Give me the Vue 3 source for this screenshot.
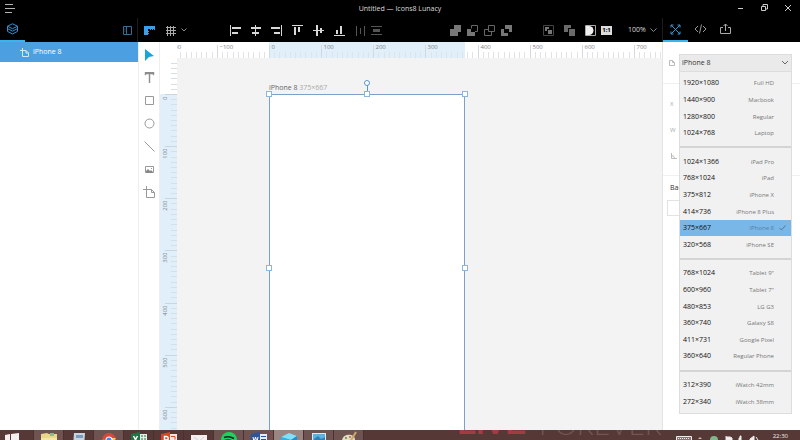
<script setup>
import { ref } from 'vue'

const scale = 0.5213
const origin = { x: 92, y: 36 }
const artboard = { width: 196, height: 348 }

const ticks = (start, from, length) => {
  const list = []
  for (let v = from; start + v * scale < length; v += 10) {
    list.push({ value: v, at: Math.round(start + v * scale) + 0.5, major: v % 100 === 0 })
  }
  return list
}
const across = ticks(origin.x, -200, window.innerWidth - 315)
const down = ticks(origin.y, -60, window.innerHeight - 68)
const minus = (v) => String(v).replace('-', '−')

const aligns = [
  { name: 'Align left', d: 'M1 0h1v11H1zM3 2h9v2H3zM3 7h6v2H3z' },
  { name: 'Align centre', d: 'M5 0h1v11H5zM1 2h10v2H1zM2 7h7v2H2z' },
  { name: 'Align right', d: 'M10 0h1v11h-1zM0 2h9v2H0zM3 7h6v2H3z' },
  { name: 'Align top', d: 'M0 0h11v1H0zM2 2h2v8H2zM6 2h2v5H6z' },
  { name: 'Align middle', d: 'M0 5h11v1H0zM3 0h2v11H3zM7 3h2v5H7z' },
  { name: 'Align bottom', d: 'M0 10h11v1H0zM2 5h2v4H2zM6 1h2v8H6z' },
  { name: 'Distribute horizontally', d: 'M1 1h1v10H1zM9 1h1v10H9zM5 3h1v6H5z', dim: true },
]
const booleans = [
  { name: 'Union', fill: 'M4 0h7v7H8v4H0V4h4z', line: '' },
  { name: 'Subtract', fill: 'M0 4h4v3h4v4H0z', line: 'M4.500 3.500v-3h6v6H8' },
  { name: 'Intersect', fill: '', line: 'M4.500 .5h6v6h-6zM4 4.500H.5v6h7V7' },
  { name: 'Exclude', fill: 'M4 0h7v7H8V4H4zM0 4h3v4h4v3H0z', line: '' },
]
const groups = [
  [['1920×1080', 'Full HD'], ['1440×900', 'Macbook'], ['1280×800', 'Regular'], ['1024×768', 'Laptop']],
  [['1024×1366', 'iPad Pro'], ['768×1024', 'iPad'], ['375×812', 'iPhone X'], ['414×736', 'iPhone 8 Plus'], ['375×667', 'iPhone 8'], ['320×568', 'iPhone SE']],
  [['768×1024', 'Tablet 9"'], ['600×960', 'Tablet 7"'], ['480×853', 'LG G3'], ['360×740', 'Galaxy S8'], ['411×731', 'Google Pixel'], ['360×640', 'Regular Phone']],
  [['312×390', 'iWatch 42mm'], ['272×340', 'iWatch 38mm']],
]
const preset = ref('iPhone 8')
const zoom = ref('100%')
</script>

<template>
  <div class="app">
    <header class="titlebar">
      <button class="plain" aria-label="Menu">
        <svg width="20" height="18"><path d="M5 4.500h8M5 8.500h10M5 12.500h7" stroke="#b5b5b5" /></svg>
      </button>
      <h1>Untitled — Icons8 Lunacy</h1>
      <div class="window">
        <button class="plain" aria-label="Minimize"><svg width="8" height="8"><path d="M2 4.500h5" stroke="#ccc" /></svg></button>
        <button class="plain" aria-label="Restore"><svg width="8" height="8"><path d="M1.500 2.500h4v4h-4zM3 2V.5h4.500V5H6" fill="none" stroke="#ccc" /></svg></button>
        <button class="plain" aria-label="Close"><svg width="8" height="8"><path d="M1 1l6 6M7 1L1 7" stroke="#ccc" /></svg></button>
      </div>
    </header>

    <nav class="toolbar">
      <div class="side">
        <button class="tab on" aria-label="Layers">
          <svg width="13" height="12" fill="none" stroke="#3690d0"><path d="M6.500 .8l5 2.400-5 2.500-5-2.500zM1.500 3.200v5.200l5 2.600 5-2.600V3.200M1.500 5.600l5 2.600 5-2.600" /></svg>
        </button>
        <button class="plain" aria-label="Pages">
          <svg width="9" height="9" fill="none" stroke="#2f6f9e"><path d="M.5 .5h8v8h-8zM3.500 .5v8M1.500 3h1M1.500 5h1" /></svg>
        </button>
      </div>
      <div class="middle">
        <div class="set">
          <button class="plain w21" aria-label="Rulers">
            <svg width="11" height="11"><path d="M0 1h11v4h-1V4H9v1H8V4H7v1H6V4H4v2h1v1H4v1h1v1H4v1H0z" fill="#3a9fe6" /></svg>
          </button>
          <button class="plain w21" aria-label="Grid">
            <svg width="11" height="11"><path d="M2.500 1v10M5.500 1v10M8.500 1v10M1 2.500h10M1 5.500h10M1 8.500h10" stroke="#aaa" /></svg>
          </button>
          <button class="plain" aria-label="Grid options">
            <svg width="6" height="6"><path d="M.5 1.500l2.500 2.500 2.500-2.500" fill="none" stroke="#888" /></svg>
          </button>
        </div>
        <div class="set aligns">
          <button v-for="a in aligns" :key="a.name" class="plain w21" :aria-label="a.name">
            <svg width="12" height="11"><path :d="a.d" :fill="a.dim ? '#555' : '#d8d8d8'" /></svg>
          </button>
          <button class="plain" aria-label="Distribute vertically">
            <svg width="11" height="11"><path d="M0 1h11v1H0zM0 9h11v1H0zM2 4h7v3H2z" fill="#555" /></svg>
          </button>
        </div>
        <div class="set booleans">
          <button v-for="b in booleans" :key="b.name" class="plain w17" :aria-label="b.name">
            <svg width="11" height="11"><path :d="b.fill" fill="#777" /><path :d="b.line" fill="none" stroke="#666" /></svg>
          </button>
        </div>
        <div class="set extras">
          <button class="plain w21" aria-label="Group">
            <svg width="11" height="11"><path d="M.5 .5h10v10H.5z" fill="none" stroke="#444" /><path d="M2 2h4v2H4v2H2zM5 5h4v4H5z" fill="#777" /></svg>
          </button>
          <button class="plain w21" aria-label="Ungroup">
            <svg width="11" height="11"><path d="M0 0h7v3H4v4H0zM5 4h6v7H5z" fill="#6a6a6a" /></svg>
          </button>
          <button class="plain w21" aria-label="Mask">
            <svg width="11" height="11"><path d="M.5 .5h10v10H.5z" fill="none" stroke="#aaa" /><path d="M1 1h3a4.500 4.500 0 010 9H1z" fill="#eee" /></svg>
          </button>
          <button class="plain ratio" aria-label="Actual size">1:1</button>
        </div>
        <label class="zoom">
          <select v-model="zoom" aria-label="Zoom"><option>100%</option><option>200%</option></select>
          <svg width="7" height="6"><path d="M.5 1.500l3 3 3-3" fill="none" stroke="#888" /></svg>
        </label>
      </div>
      <div class="modes">
        <button class="tab on" aria-label="Design">
          <svg width="11" height="11" fill="none" stroke="#3b93d2"><path d="M1 1l9 9M10 1l-9 9M1 3.500V1h2.500M7.500 1H10v2.500M10 7.500V10H7.500M3.500 10H1V7.500" /></svg>
        </button>
        <button class="tab" aria-label="Code">
          <svg width="13" height="10" fill="none" stroke="#999"><path d="M4 2L1 5l3 3M9 2l3 3-3 3M7.500 .5l-2 9" /></svg>
        </button>
        <button class="tab" aria-label="Export">
          <svg width="13" height="12" fill="none" stroke="#aaa"><path d="M4 4.500H1.500v6h10v-6H9M6.500 8V1M4.500 3l2-2 2 2" /></svg>
        </button>
      </div>
    </nav>

    <main class="body">
      <aside class="layers">
        <button class="layer">
          <svg width="9" height="9" fill="none" stroke="#d5e8f8"><path d="M2.500 0v8.500h6V5L6 2.500H0M6 2.500V5h2.500" /></svg>
          <span>iPhone 8</span>
        </button>
      </aside>

      <nav class="tools">
        <button class="plain" aria-label="Select"><svg width="11" height="13"><path d="M1 1l9 7-5 1-4 4z" fill="#18a5dc" /></svg></button>
        <button class="plain" aria-label="Text"><svg width="11" height="11"><path d="M1 0h9v3H9V2H6v9H5V2H2v1H1z" fill="#888" stroke="#999" stroke-width=".5" /></svg></button>
        <button class="plain" aria-label="Rectangle"><svg width="11" height="11"><path d="M1.500 1.500h8v8h-8z" fill="none" stroke="#999" /></svg></button>
        <button class="plain" aria-label="Oval"><svg width="11" height="11"><circle cx="5.500" cy="5.500" r="4.500" fill="none" stroke="#999" /></svg></button>
        <button class="plain" aria-label="Line"><svg width="11" height="11"><path d="M.5 .5l10 10" stroke="#999" /></svg></button>
        <button class="plain" aria-label="Image"><svg width="11" height="9"><path d="M1.500 1.500h8v6h-8z" fill="none" stroke="#999" /><path d="M2 6l2-2 2 2 1-1 2 2v1H2z" fill="#888" /><path d="M7 3h1v1H7z" fill="#999" /></svg></button>
        <button class="plain" aria-label="Artboard"><svg width="13" height="13" fill="none" stroke="#999"><path d="M3.500 0v11.500h8V6.500l-3-3H0M8.500 3.500v3h3" /></svg></button>
      </nav>

      <section class="stage">
        <div class="corner"></div>
        <svg class="ruler top">
          <rect :x="origin.x" y="0" :width="artboard.width" height="17" fill="#e1effa" />
          <g v-for="t in across" :key="t.value">
            <path :d="`M${t.at} ${t.major ? 3 : 10}V17`" :stroke="t.major ? '#d3d9de' : '#dfe3e6'" />
            <text v-if="t.major" :x="t.at + 2" y="7">{{ minus(t.value) }}</text>
          </g>
        </svg>
        <svg class="ruler left">
          <rect x="0" :y="origin.y" width="17" height="2000" fill="#e1effa" />
          <g v-for="t in down" :key="t.value">
            <path :d="`M${t.major ? 5 : 11} ${t.at}H17`" :stroke="t.major ? '#c8d6e0' : '#d5dfe6'" />
            <text v-if="t.major" text-anchor="end" :transform="`translate(7 ${t.at + 2}) rotate(-90)`">{{ t.value }}</text>
          </g>
        </svg>
        <div class="canvas">
          <div class="artboard" :style="{ left: origin.x + 'px', top: origin.y - 13 + 'px', width: artboard.width + 'px' }">
            <p>iPhone 8 <span>375×667</span></p>
            <div class="sheet" :style="{ height: artboard.height + 'px' }">
              <i class="stem"></i><i class="knob"></i>
              <i class="handle tl"></i><i class="handle tc"></i><i class="handle tr"></i>
              <i class="handle ml"></i><i class="handle mr"></i>
            </div>
          </div>
        </div>
      </section>

      <aside class="inspector">
        <div class="part size">
          <svg width="8" height="8" fill="none" stroke="#bbb"><path d="M1.500 1.500h3l2 2v3h-5zM4.500 1.500v2h2" /></svg>
          <div class="picker">
            <select v-model="preset" aria-label="Artboard preset">
              <template v-for="g in groups"><option v-for="p in g" :key="p[1]">{{ p[1] }}</option></template>
            </select>
            <svg class="arrow" width="8" height="6"><path d="M1 1l3 3 3-3" fill="none" stroke="#666" /></svg>
            <div class="menu">
              <template v-for="(g, i) in groups" :key="i">
                <hr v-if="i" />
                <button v-for="p in g" :key="p[1]" class="item" :class="{ chosen: p[1] === preset }" @click="preset = p[1]">
                  <span>{{ p[0] }}</span><small>{{ p[1] }}</small>
                  <svg v-if="p[1] === preset" width="7" height="6"><path d="M.5 3l2 2 4-4.500" fill="none" stroke="#4f7898" /></svg>
                </button>
              </template>
            </div>
          </div>
        </div>
        <div class="part place">
          <label>X <input type="text" /></label>
          <label>W <input type="text" /></label>
          <label><svg width="7" height="7"><path d="M1.500 0v5.500H7M1.500 2.500a3 3 0 013 3" fill="none" stroke="#bbb" /></svg><input type="text" aria-label="Angle" /></label>
        </div>
        <div class="part fill">
          <label for="fill">Background</label>
          <input id="fill" type="text" />
        </div>
      </aside>
    </main>

    <footer class="taskbar">
      <div class="task start"><svg width="16" height="16"><path d="M1 4l5-1v6H1zM7 3l8-1v7H7zM1 10h5v6l-5-1zM7 10h8v7l-8-1z" fill="#f4eeee" /></svg></div>
      <div class="task open"><svg width="18" height="16"><path d="M1 3l6-1 2 1h8v13H1z" fill="#ead98a" /><path d="M1 7h16v9H1z" fill="#f5e9a8" /><path d="M10 2h4v3h-4z" fill="#8fb98a" /></svg></div>
      <div class="task"><svg width="14" height="16"><path d="M2 2h11l-1 14H1z" fill="#c5d5e2" /><path d="M4 4h7v3H4z" fill="#7c9ab5" /></svg></div>
      <div class="task open"><svg width="16" height="16"><circle cx="8" cy="9" r="7" fill="#d9483b" /><path d="M1 8l4 7 3-6z" fill="#4caf50" /><path d="M9 16l6-9H8z" fill="#f5cf4a" /><circle cx="8" cy="9" r="3.500" fill="#fff" /><circle cx="8" cy="9" r="2.500" fill="#4285f4" /></svg></div>
      <div class="task"><svg width="16" height="16"><path d="M8 3h8v12H8z" fill="#e6f0e9" /><path d="M10 5h2M13 5h2M10 8h2M13 8h2" stroke="#217346" /><path d="M0 3l9-2v15l-9-2z" fill="#217346" /><path d="M2.500 5l4 7M6.500 5l-4 7" stroke="#fff" stroke-width="1.500" /></svg></div>
      <div class="task"><svg width="16" height="16"><path d="M8 3h8v12H8z" fill="#f6e3dd" /><path d="M10 5.500h4v3" fill="none" stroke="#d24726" /><path d="M0 3l9-2v15l-9-2z" fill="#d24726" /><path d="M3.500 12V5.500h2a1.500 1.500 0 010 3.500h-2" fill="none" stroke="#fff" stroke-width="1.500" /></svg></div>
      <div class="task"><svg width="16" height="16"><path d="M0 4h16v11H0z" fill="#f3eff0" /><path d="M3 6l5 4 5-4" fill="none" stroke="#d5cfd2" /></svg></div>
      <div class="task open"><svg width="16" height="16"><circle cx="8" cy="9" r="8" fill="#1fd15f" /><path d="M3 6.500q5-2 10 1M4 9.500q4-1.500 8 1" fill="none" stroke="#222" stroke-width="1.500" /></svg></div>
      <div class="task open"><svg width="16" height="16"><path d="M8 3h8v12H8z" fill="#e7edf7" /><path d="M10 5.500h5M10 8.500h5" stroke="#2b579a" /><path d="M0 3l9-2v15l-9-2z" fill="#2b579a" /><path d="M2 6l1 5 1.500-5L6 11l1-5" fill="none" stroke="#fff" /></svg></div>
      <div class="task active"><svg width="18" height="16"><path d="M1 6l8-4 8 3-6 4z" fill="#7fe0fa" /><path d="M1 6l10 3v7l-10-4z" fill="#2cb3e8" /><path d="M11 9l6-4v7l-6 4z" fill="#1793cf" /></svg></div>
      <div class="task open"><svg width="16" height="16"><path d="M1 2h14v13H1z" fill="#d8ebf5" /><path d="M2 3h12v9H2z" fill="#5ab3df" /><path d="M3 8l4-3 3 3 4-2v6H3z" fill="#327fb5" /></svg></div>
      <div class="task open"><svg width="18" height="16"><path d="M2 10c0-5 5-7 9-6s5 5 3 8-12 5-12-2z" fill="#e3dcc0" /><circle cx="6" cy="7" r="1" fill="#5f8b56" /><circle cx="10" cy="6" r="1" fill="#c35c4b" /><path d="M10 11l6-10" stroke="#c9a86a" stroke-width="2" /></svg></div>
      <div class="wallpaper"><b>LIVE</b><span>FOREVER</span></div>
      <div class="tray">
        <svg width="16" height="10"><path d="M.5 6.500h15v5H.5z" fill="#8a7372" stroke="#eee" /><path d="M2 8.500h12" stroke="#eee" stroke-dasharray="1 1" /></svg>
        <svg width="46" height="10"><path d="M1 9l2-2 2 2z" fill="#bba" /><circle cx="17" cy="10" r="4" fill="#7fb68b" /><path d="M29 6v4M29 7h4l2 1v2h-6M42 10V8h1V6h1v4" stroke="#eee" fill="#eee" /></svg>
        <svg width="12" height="10"><path d="M2 9l4-3v4H2zM8 7l2 3" fill="#eee" stroke="#eee" /></svg>
        <time>22:30</time>
      </div>
    </footer>
  </div>
</template>

<style>
body { margin: 0; }
</style>

<style scoped>
* { box-sizing: border-box; }
.app {
  display: grid;
  grid-template-rows: 18px 24px minmax(0, 1fr) 10px;
  height: 100vh;
  overflow: hidden;
  background: #fff;
  color: #333;
  font: 7px/10px "Open Sans", "Noto Sans", sans-serif;
}
button, select, input { font: inherit; color: inherit; margin: 0; padding: 0; border: 0; background: none; border-radius: 0; }
select { appearance: none; outline: 0; }
svg { display: block; flex: none; }
.plain { display: flex; align-items: center; justify-content: center; }
.w21 { width: 21px; }
.w17 { width: 17px; }

.titlebar { display: grid; grid-template-columns: 1fr auto 1fr; background: #000; }
.titlebar > .plain { justify-self: start; }
h1 { margin: 0; font: inherit; line-height: 18px; color: #ddd; }
.window { display: flex; justify-content: flex-end; align-items: center; gap: 16px; padding: 0 8px 2px 0; }

.toolbar { display: grid; grid-template-columns: 138px minmax(0, 1fr) 138px; background: #000; }
.side { display: flex; justify-content: space-between; padding-right: 5px; border-right: 1px solid #1c1c1c; }
.tab { display: flex; align-items: center; justify-content: center; width: 25px; border-bottom: 2px solid transparent; }
.tab.on { border-color: #35b6ec; }
.middle { display: flex; align-items: center; padding-left: 1px; }
.set { display: flex; align-items: center; }
.aligns { margin-left: 37px; }
.booleans { margin-left: auto; }
.extras { margin-left: 23px; }
.ratio { width: 11px; height: 9px; background: #ddd; color: #000; font-size: 6px; line-height: 9px; font-weight: 700; }
.zoom { display: flex; align-items: center; gap: 2px; margin: 0 5px 0 16px; color: #ddd; }
.zoom select { width: 20px; }
.modes { display: flex; border-left: 1px solid #1c1c1c; }

.body { display: grid; grid-template-columns: 138px 22px minmax(0, 1fr) 138px; }
.layer { display: flex; align-items: center; gap: 4px; width: 100%; height: 20px; padding-left: 20px; background: #4c9fe1; color: #fff; }
.tools { display: grid; grid-auto-rows: 23px; align-content: start; padding-top: 1px; border-right: 1px solid #eee; border-left: 1px solid #eee; }

.stage { display: grid; grid-template: 16px minmax(0, 1fr) / 17px minmax(0, 1fr); min-height: 0; }
.ruler { width: 100%; height: 100%; overflow: hidden; font-size: 6px; }
.ruler text { fill: #7d8185; }
.canvas { position: relative; overflow: hidden; background: #f3f3f3; }
.artboard { position: absolute; }
.artboard p { margin: 0 0 1px; height: 12px; line-height: 14px; color: #666; white-space: nowrap; }
.artboard p span { color: #aaa; }
.sheet { position: relative; background: #fff; border: 1px solid #7d9fcc; }
.handle, .knob { position: absolute; width: 6px; height: 6px; background: #fff; border: 1px solid #8db6dc; }
.tl, .tc, .tr { top: -4px; }
.ml, .mr { top: calc(50% - 3px); }
.tl, .ml { left: -4px; }
.tr, .mr { right: -4px; }
.tc, .knob { left: calc(50% - 3px); }
.knob { top: -15px; border-color: #5c95d0; border-radius: 50%; }
.stem { position: absolute; left: 50%; top: -10px; height: 8px; border-left: 1px solid #5c95d0; }

.inspector { border-left: 1px solid #e4e4e4; }
.part { border-bottom: 1px solid #f0f0f0; }
.size { display: flex; align-items: center; gap: 3px; padding: 12px 8px 11px 5px; }
.picker { position: relative; flex: 1; }
.picker select { display: block; width: 100%; height: 18px; padding-left: 2px; background: #eaeaea; border: 1px solid #ddd; }
.arrow { position: absolute; right: 3px; top: 6px; }
.menu {
  position: absolute; z-index: 2; top: 18px; left: 0; right: 0; height: 342px;
  display: flex; flex-direction: column; padding: 3px 0;
  background: #f1f1f1; border: solid #ddd; border-width: 0 1px 1px;
}
.menu hr { width: 100%; height: 2px; margin: 5px 0; border: 0; background: #d4d4d4; flex: none; }
.item { display: grid; grid-template-columns: auto 1fr 7px; gap: 5px; align-items: center; flex: 1 1 0; min-height: 0; padding: 0 5px 0 3px; text-align: left; color: #111; }
.item small { font-size: 6px; text-align: right; color: #777; }
.item.chosen { background: #79b7e8; }
.item.chosen small { color: #55809f; }
.place { padding: 7px 8px 6px 7px; }
.place label { display: flex; align-items: center; height: 26px; gap: 4px; color: #aaa; font-size: 6px; }
.place input { flex: 1; min-width: 0; }
.fill { padding: 5px 8px 0 4px; border: 0; }
.fill label { display: block; padding-left: 3px; line-height: 14px; }
.fill input { display: block; width: 100%; height: 16px; margin-top: 5px; border: 1px solid #e2e2e2; }

.taskbar { display: flex; overflow: hidden; background: #563836; align-items: flex-start; padding-left: 4px; }
.task { display: flex; justify-content: center; flex: none; width: 30px; height: 30px; padding-top: 1px; border-right: 1px solid #4a302e; }
.task.start { justify-content: flex-start; }
.task.open { background: #6e5350; }
.task.active { background: #9b8582; }
.wallpaper { flex: 1; display: flex; justify-content: flex-end; gap: 13px; padding-right: 14px; height: 5px; align-items: flex-end; overflow: hidden; color: #745653; white-space: nowrap; }
.wallpaper b { color: #a33b43; font: 700 31px/22px "Liberation Sans", sans-serif; }
.wallpaper span { font: 300 28px/21px Lato, sans-serif; }
.tray { display: flex; gap: 5px; padding-right: 12px; color: #eee; }
.tray time { margin-left: 8px; font-size: 6px; line-height: 12px; }
</style>
